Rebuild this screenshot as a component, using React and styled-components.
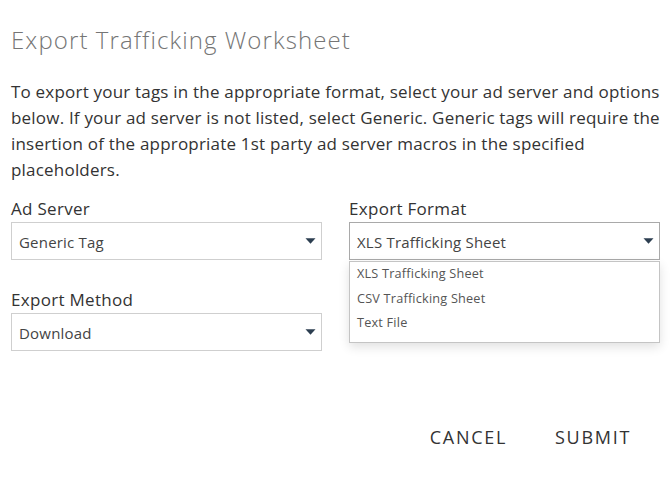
import React from 'react';
import styled, { createGlobalStyle } from 'styled-components';

const GlobalStyle = createGlobalStyle`
  html, body {
    margin: 0;
    padding: 0;
    background: #fff;
  }
  body {
    font-family: "Open Sans", "Liberation Sans", sans-serif;
    color: #333;
  }
`;

const Wrapper = styled.div`
  width: 670px;
  height: 482px;
  box-sizing: border-box;
  padding: 23px 11px 0;
  display: flex;
  flex-direction: column;
`;

const Title = styled.h1`
  margin: 0;
  font: 300 24px/34px "Open Sans", sans-serif;
  color: #757575;
  letter-spacing: 1.1px;
`;

const Intro = styled.p`
  margin: 22px 0 0;
  width: 655px;
  font: 400 17px/26px "Open Sans", sans-serif;
  color: #333;
  letter-spacing: 0.2px;
`;

const Fields = styled.div`
  margin-top: 13px;
  display: grid;
  grid-template-columns: 311px 311px;
  column-gap: 27px;
`;

const Column = styled.div`
  display: flex;
  flex-direction: column;
`;

const Field = styled.div`
  display: flex;
  flex-direction: column;
  margin-bottom: ${p => (p.$last ? 0 : '27px')};
`;

const Label = styled.label`
  font: 400 17px/26px "Open Sans", sans-serif;
  letter-spacing: 0.3px;
  color: #333;
`;

const SelectBox = styled.div`
  position: relative;
  height: 38px;
  box-sizing: border-box;
  border: 1px solid ${p => (p.$open ? '#a9a9a9' : '#cfcfcf')};
  display: flex;
  align-items: center;
  justify-content: space-between;
  padding: 2px 5px 0 7px;
  font: 400 15px "Open Sans", sans-serif;
  letter-spacing: 0.2px;
  color: #444;
  background: #fff;
`;

const Caret = styled.svg`
  width: 11px;
  height: 6px;
  flex: none;
  margin-top: -3px;
`;

const Menu = styled.ul`
  position: absolute;
  top: 38px;
  left: -1px;
  right: -1px;
  margin: 0;
  padding: 0 0 7px;
  list-style: none;
  background: #fff;
  border: 1px solid #c4c4c4;
  box-shadow: 0 4px 10px rgba(0, 0, 0, 0.12);
  z-index: 2;
`;

const MenuItem = styled.li`
  padding: 0 7px;
  font: 400 12.7px/24.5px "Open Sans", sans-serif;
  color: #555;
  &:first-child {
    margin-top: -1px;
  }
`;

const Footer = styled.div`
  margin-top: auto;
  margin-bottom: 33px;
  display: flex;
  justify-content: flex-end;
  gap: 48px;
  padding-right: 28px;
`;

const Button = styled.button`
  border: none;
  background: none;
  padding: 0;
  font: 400 18px/24px "Open Sans", sans-serif;
  letter-spacing: 1.7px;
  color: #333;
  cursor: pointer;
`;

const CaretIcon = () => (
  <Caret viewBox="0 0 11 6">
    <path d="M0.5 0.3 H10.5 L5.5 5.8 Z" fill="#2c3e50" />
  </Caret>
);

const Select = ({ value, open, options }) => (
  <SelectBox $open={open}>
    <span>{value}</span>
    <CaretIcon />
    {open && (
      <Menu>
        {options.map(o => (
          <MenuItem key={o}>{o}</MenuItem>
        ))}
      </Menu>
    )}
  </SelectBox>
);

export default function App() {
  return (
    <Wrapper>
      <GlobalStyle />
      <Title>Export Trafficking Worksheet</Title>
      <Intro>
        To export your tags in the appropriate format, select your ad server and options
        below. If your ad server is not listed, select Generic. Generic tags will require the
        insertion of the appropriate 1st party ad server macros in the specified
        placeholders.
      </Intro>
      <Fields>
        <Column>
          <Field>
            <Label>Ad Server</Label>
            <Select value="Generic Tag" />
          </Field>
          <Field $last>
            <Label>Export Method</Label>
            <Select value="Download" />
          </Field>
        </Column>
        <Column>
          <Field>
            <Label>Export Format</Label>
            <Select
              value="XLS Trafficking Sheet"
              open
              options={['XLS Trafficking Sheet', 'CSV Trafficking Sheet', 'Text File']}
            />
          </Field>
        </Column>
      </Fields>
      <Footer>
        <Button>CANCEL</Button>
        <Button>SUBMIT</Button>
      </Footer>
    </Wrapper>
  );
}
